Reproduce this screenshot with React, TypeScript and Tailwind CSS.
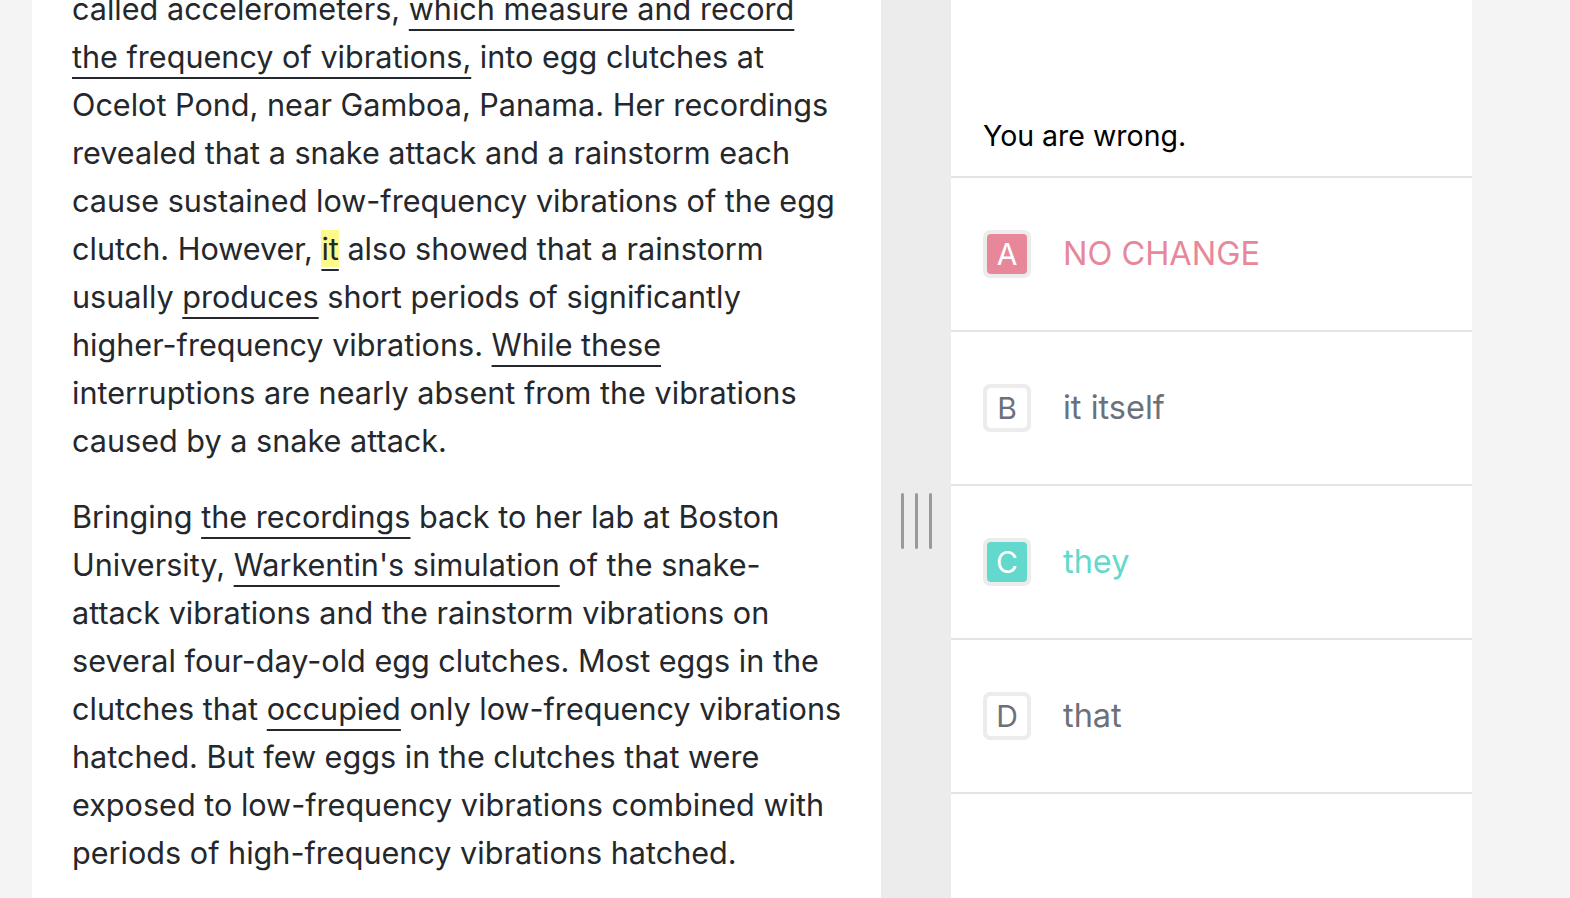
import React from "react";

const U = ({ children }: { children: React.ReactNode }) => (
  <span className="underline decoration-2 underline-offset-[9px] decoration-[#24282c]">{children}</span>
);

const para1: React.ReactNode[] = [
  <>called accelerometers, <U>which measure and record</U></>,
  <><U>the frequency of vibrations,</U> into egg clutches at</>,
  <>Ocelot Pond, near Gamboa, Panama. Her recordings</>,
  <>revealed that a snake attack and a rainstorm each</>,
  <>cause sustained low-frequency vibrations of the egg</>,
  <>
    clutch. However,{" "}
    <span className="bg-[#fdfa8c] underline decoration-2 underline-offset-[9px]">it</span> also showed that a rainstorm
  </>,
  <>usually <U>produces</U> short periods of significantly</>,
  <>higher-frequency vibrations. <U>While these</U></>,
  <>interruptions are nearly absent from the vibrations</>,
  <>caused by a snake attack.</>,
];

const para2: React.ReactNode[] = [
  <>Bringing <U>the recordings</U> back to her lab at Boston</>,
  <>University, <U>Warkentin's simulation</U> of the snake-</>,
  <>attack vibrations and the rainstorm vibrations on</>,
  <>several four-day-old egg clutches. Most eggs in the</>,
  <>clutches that <U>occupied</U> only low-frequency vibrations</>,
  <>hatched. But few eggs in the clutches that were</>,
  <>exposed to low-frequency vibrations combined with</>,
  <>periods of high-frequency vibrations hatched.</>,
];

type Opt = { letter: string; text: string; tone: "wrong" | "right" | "plain" };

const options: Opt[] = [
  { letter: "A", text: "NO CHANGE", tone: "wrong" },
  { letter: "B", text: "it itself", tone: "plain" },
  { letter: "C", text: "they", tone: "right" },
  { letter: "D", text: "that", tone: "plain" },
];

const OptionRow = ({ opt }: { opt: Opt }) => {
  const badgeFill =
    opt.tone === "wrong"
      ? "bg-[#e8879a] text-white"
      : opt.tone === "right"
      ? "bg-[#62d9cc] text-white"
      : "bg-white text-[#6b717b]";
  const textColor =
    opt.tone === "wrong" ? "text-[#e8879a]" : opt.tone === "right" ? "text-[#62d9cc]" : "text-[#6b717b]";
  return (
    <div className="h-[154px] border-b-2 border-[#e2e4e8] flex items-center pl-[32px]">
      <div className="w-[48px] h-[48px] rounded-[7px] bg-[#ececec] p-[4px]">
        <div className={`w-full h-full rounded-[4px] flex items-center justify-center text-[30px] leading-none ${badgeFill}`}>
          {opt.letter}
        </div>
      </div>
      <span className={`ml-[32px] text-[32.5px] ${textColor}`}>{opt.text}</span>
    </div>
  );
};

export default function App() {
  return (
    <div
      className="w-[1570px] h-[898px] overflow-hidden bg-[#f4f4f4] flex"
      style={{ fontFamily: "Inter, 'Noto Sans', sans-serif" }}
    >
      <div className="w-[32px] shrink-0" />
      <div className="w-[849px] shrink-0 bg-white pl-[40px] text-[#24282c] text-[30.6px] leading-[48px]">
        <div className="-mt-[15px]">
          <p>
            {para1.map((l, i) => (
              <span key={i} className="block whitespace-nowrap">{l}</span>
            ))}
          </p>
          <p className="mt-[28px]">
            {para2.map((l, i) => (
              <span key={i} className="block whitespace-nowrap">{l}</span>
            ))}
          </p>
        </div>
      </div>
      <div className="w-[70px] shrink-0 bg-[#ececec] flex items-center justify-center gap-[11px] pt-[144px]">
        <div className="w-[3px] h-[56px] bg-[#9a9a9a] rounded-full" />
        <div className="w-[3px] h-[56px] bg-[#9a9a9a] rounded-full" />
        <div className="w-[3px] h-[56px] bg-[#9a9a9a] rounded-full" />
      </div>
      <div className="w-[521px] shrink-0 bg-white">
        <div className="h-[178px] border-b-2 border-[#e2e4e8] flex items-end pl-[32px] pb-[18px] text-[28.5px] text-black">
          You are wrong.
        </div>
        {options.map((o) => (
          <OptionRow key={o.letter} opt={o} />
        ))}
      </div>
    </div>
  );
}
